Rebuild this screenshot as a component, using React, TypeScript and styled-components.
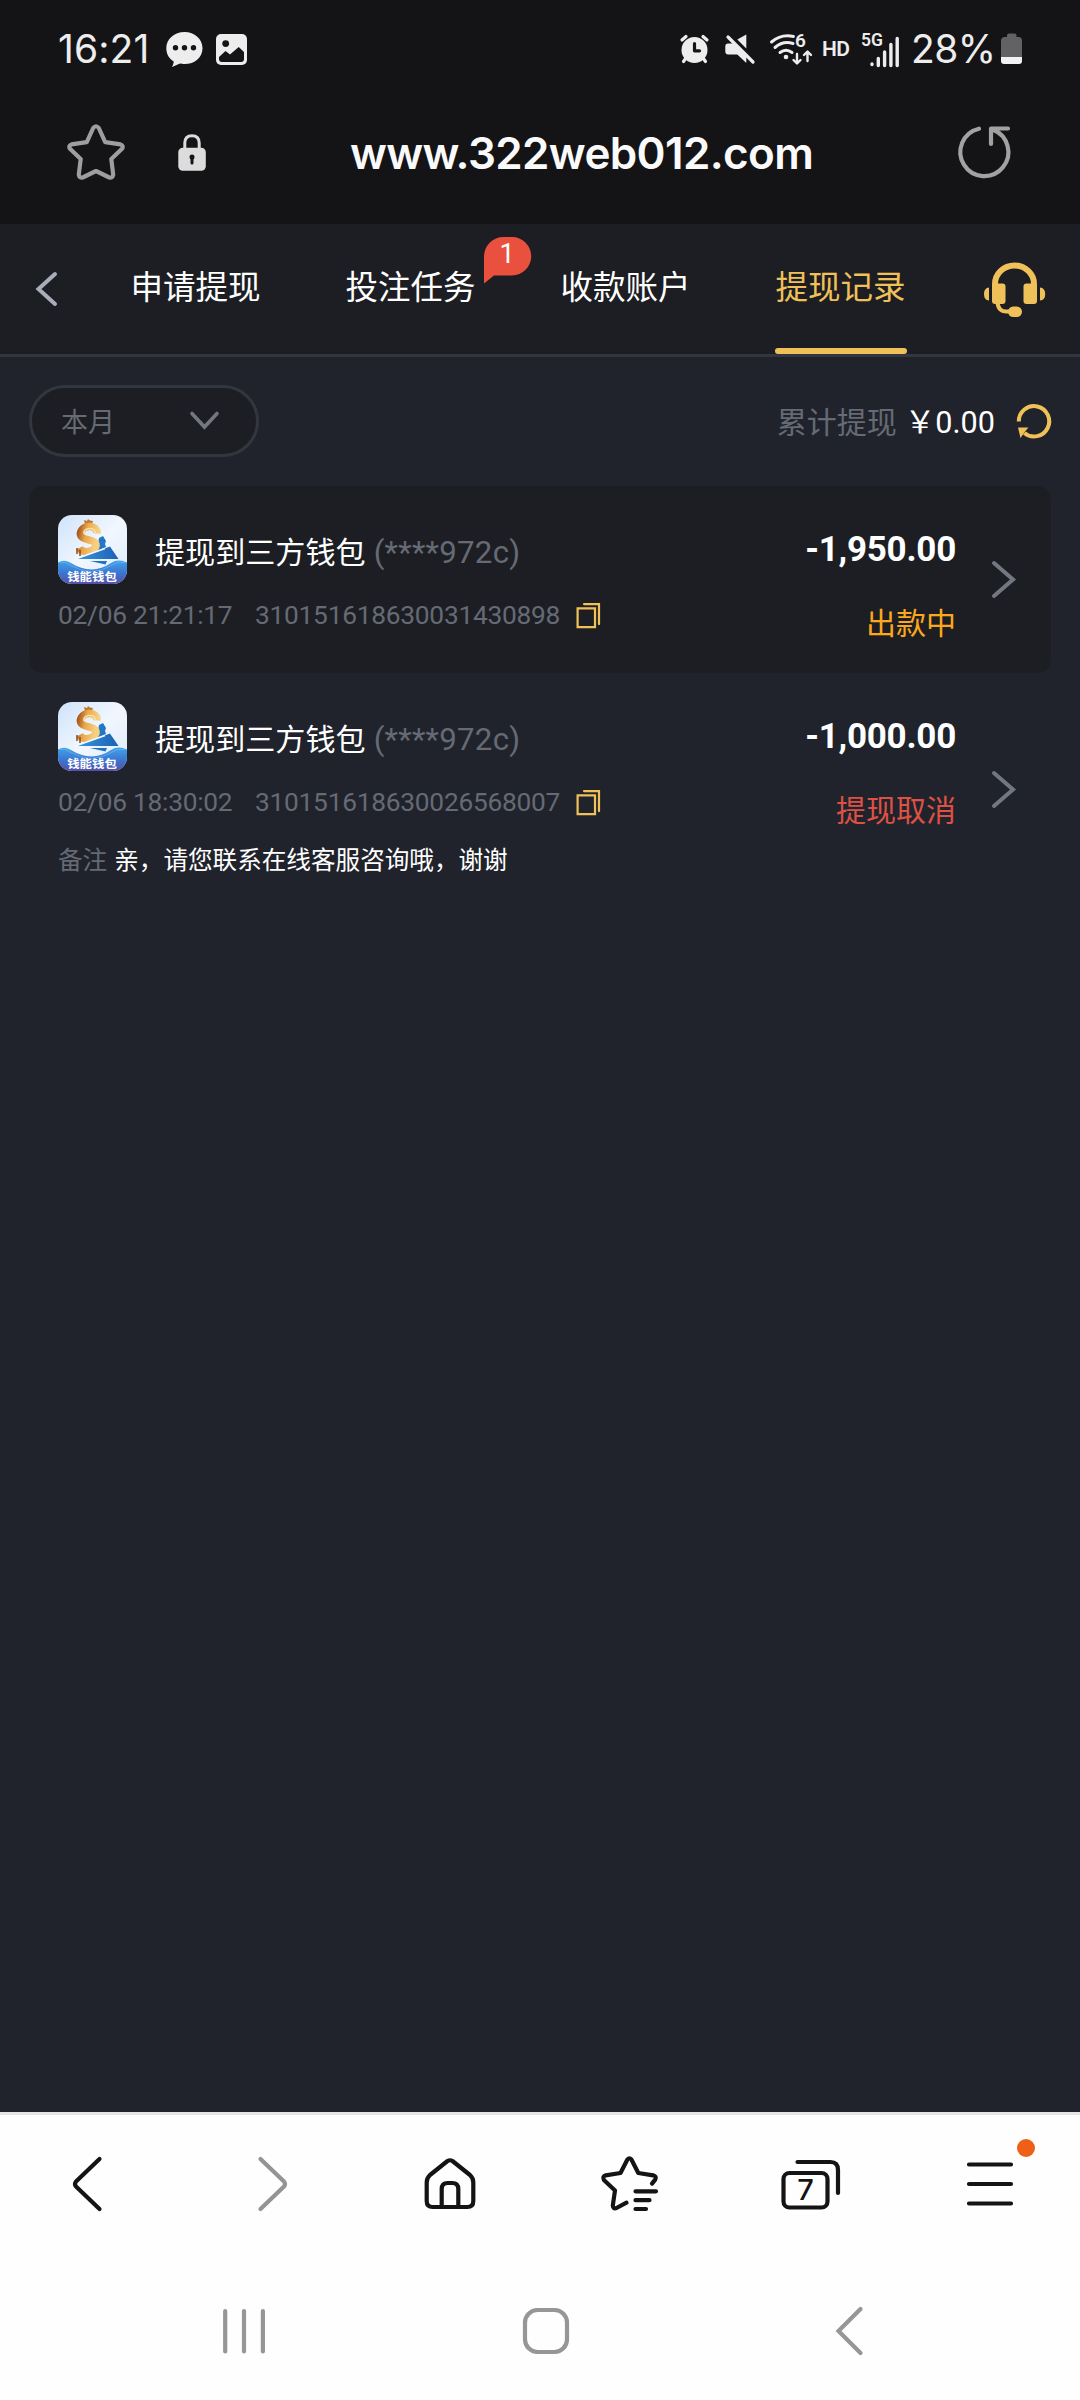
import React from "react";
import styled, { createGlobalStyle } from "styled-components";

const GlobalStyle = createGlobalStyle`
  * { box-sizing: border-box; }
  body { margin: 0; background: #20232b; }
`;

const ui = `Inter, Roboto, "Noto Sans CJK SC", sans-serif`;
const web = `Roboto, "Noto Sans CJK SC", sans-serif`;
const gold = "#f0c159";
const grey = "#656a75";

const Screen = styled.div`
  width: 1080px;
  height: 2400px;
  display: flex;
  flex-direction: column;
  background: #20232b;
  font-family: ${web};
  overflow: hidden;
`;

const Svg = styled.svg`
  display: block;
  flex: none;
  overflow: visible;
`;

/* Crops a w×h window out of the screen-sized coordinate space. */
type IconProps = { x: number; y: number; w: number; h: number; children: React.ReactNode };
const Icon = ({ x, y, w, h, children }: IconProps) => (
  <Svg width={w} height={h} viewBox={`${x} ${y} ${w} ${h}`} fill="none" strokeLinecap="round" strokeLinejoin="round">
    {children}
  </Svg>
);

/* ---------- browser chrome ---------- */

const StatusBar = styled.header`
  height: 98px;
  display: flex;
  align-items: center;
  padding: 0 57px 0 58px;
  background: #141416;
  color: #ededed;
  font: 400 39px/40px ${ui};
`;
const Clock = styled.span`
  width: 98px;
  letter-spacing: 0.1px;
  margin-right: 10px;
`;
const Notices = styled.div`
  display: flex;
  gap: 13px;
`;
const Indicators = styled.div`
  display: flex;
  align-items: center;
  margin-left: auto;
`;
const Gap = styled.span<{ $w: number }>`
  width: ${(p) => p.$w}px;
`;
const Hd = styled.span`
  width: 26px;
  font: 600 21px/24px Roboto, sans-serif;
  letter-spacing: -0.5px;
`;
const Percent = styled.span`
  width: 84px;
  letter-spacing: -0.6px;
  white-space: nowrap;
`;

const AddressBar = styled.div`
  height: 126px;
  display: flex;
  align-items: flex-start;
  padding: 24px 66px 0 66px;
  background: #141416;
`;
const Url = styled.div`
  flex: 1;
  padding-left: 143px;
  color: #fafafa;
  font: 600 44px/62px ${ui};
  letter-spacing: -0.65px;
  white-space: nowrap;
`;

/* ---------- page ---------- */

const Header = styled.nav`
  height: 133px;
  display: flex;
  background: #1d1e23;
  border-bottom: 3px solid #32363f;
`;
const BackButton = styled.div`
  width: 89px;
  padding: 46px 0 0 34px;
`;
const Tab = styled.div<{ $active?: boolean }>`
  width: 215px;
  display: flex;
  flex-direction: column;
  align-items: center;
  color: ${(p) => (p.$active ? gold : "#fff")};
  font-size: 32.5px;
  line-height: 48px;
  padding-top: 40px;
  padding-right: 2px;
`;
const TabLabel = styled.span`
  position: relative;
`;
const TabLine = styled.i`
  width: 132px;
  height: 6px;
  margin-top: auto;
  border-radius: 3px;
  background: ${gold};
`;
const Badge = styled.span`
  position: absolute;
  left: 139px;
  top: -27px;
  width: 47px;
  height: 47px;
  display: grid;
  justify-items: center;
  color: #fff;
  font-size: 27px;
  line-height: 34px;
`;
const BadgeShape = styled(Svg)`
  position: absolute;
  left: 0;
  top: 0;
`;
const BadgeText = styled.span`
  position: relative;
  padding-right: 2px;
`;
const Support = styled.div`
  padding: 37px 0 0 34px;
`;

const FilterRow = styled.section`
  display: flex;
  justify-content: space-between;
  padding: 28px 29px 29px;
`;
const MonthSelect = styled.div`
  width: 230px;
  height: 72px;
  display: flex;
  align-items: center;
  justify-content: space-between;
  padding: 0 36px 2px 29px;
  border: 3px solid #32363f;
  border-radius: 36px;
  background: #1d1e23;
  color: ${grey};
  font-size: 27px;
  line-height: 40px;
`;
const MonthLabel = styled.span`
  padding-top: 6px;
`;
const Total = styled.div`
  display: flex;
  align-items: center;
  color: ${grey};
  font-size: 30px;
  line-height: 44px;
`;
const TotalLabel = styled.span`
  padding-top: 4px;
`;
const TotalValue = styled.b`
  margin: 0 21px 0 8px;
  padding-top: 4px;
  color: #fff;
  font-weight: 400;
  font-size: 30.6px;
`;

const Record = styled.article<{ $dark?: boolean; $h: number }>`
  height: ${(p) => p.$h}px;
  margin: 0 29px;
  padding: 28px 36px 0 29px;
  display: flex;
  border-radius: 14px;
  background: ${(p) => (p.$dark ? "#1d1e23" : "transparent")};
`;
const Info = styled.div`
  flex: 1;
  display: flex;
  flex-direction: column;
`;
const TitleRow = styled.div`
  height: 71px;
  display: flex;
  align-items: center;
  gap: 28px;
`;
const Title = styled.div`
  padding-top: 6px;
  color: #fff;
  font-size: 30.1px;
  line-height: 44px;
  white-space: pre;
`;
const Muted = styled.span`
  color: ${grey};
`;
const Account = styled(Muted)`
  font-size: 31.2px;
  letter-spacing: 0.25px;
`;
const Meta = styled.div`
  height: 32px;
  margin-top: 14px;
  display: flex;
  align-items: center;
  color: ${grey};
  font-size: 26.3px;
  line-height: 32px;
  letter-spacing: -0.25px;
`;
const Time = styled.span`
  width: 197px;
  white-space: nowrap;
`;
const OrderNo = styled.span`
  width: 320px;
`;
const Note = styled.div`
  margin-top: 23px;
  display: flex;
  gap: 7px;
  color: #fff;
  font-size: 24.6px;
  line-height: 40px;
`;
const Result = styled.div`
  display: flex;
  flex-direction: column;
  align-items: flex-end;
  margin-right: 35px;
`;
const Amount = styled.strong`
  margin-top: 14px;
  color: #fff;
  font-size: 35px;
  line-height: 44px;
  letter-spacing: -0.25px;
`;
const Status = styled.span<{ $color: string }>`
  margin-top: 30px;
  color: ${(p) => p.$color};
  font-size: 30px;
  line-height: 44px;
`;
const Arrow = styled.div`
  display: flex;
  align-items: center;
  padding-bottom: 28px;
`;

/* ---------- bottom bars ---------- */

const Toolbar = styled.footer`
  height: 142px;
  margin-top: auto;
  padding-top: 37px;
  display: grid;
  grid-template-columns: repeat(6, 180px);
  justify-items: center;
  align-items: start;
  background: #fefefe;
  border-top: 3px solid #e5e5e7;
`;
const SystemNav = styled.div`
  height: 146px;
  padding: 46px 80px 0 93px;
  display: grid;
  grid-template-columns: repeat(3, 302px);
  justify-items: center;
  align-items: start;
  background: #fefefe;
`;

const WalletLogo = () => (
  <Svg width="69" height="69" viewBox="0 0 69 69">
    <defs>
      <clipPath id="tile"><rect width="69" height="69" rx="14" /></clipPath>
      <linearGradient id="sky" x1="0" y1="0" x2="1" y2="1">
        <stop offset="0" stopColor="#cfe3fb" /><stop offset=".5" stopColor="#f1f7fe" /><stop offset="1" stopColor="#dbeafd" />
      </linearGradient>
      <linearGradient id="sea" x1="0" y1="0" x2="0" y2="1">
        <stop offset="0" stopColor="#42a3ea" /><stop offset=".55" stopColor="#3b74cf" /><stop offset="1" stopColor="#5750a8" />
      </linearGradient>
      <linearGradient id="coin" x1="0" y1="0" x2="1" y2=".3">
        <stop offset="0" stopColor="#a95b22" /><stop offset=".4" stopColor="#e9a64a" /><stop offset="1" stopColor="#f6cf80" />
      </linearGradient>
      <linearGradient id="hull" x1="0" y1="0" x2="1" y2="0">
        <stop offset="0" stopColor="#3a9ae0" /><stop offset="1" stopColor="#1c5fb4" />
      </linearGradient>
    </defs>
    <g clipPath="url(#tile)">
      <rect width="69" height="69" fill="url(#sky)" />
      <path d="M41 23l4-2 3 5-1 3 1 3-9 4z" fill="#2477c4" />
      <path d="M26 5l3 1 1-2 2 1.500 3 .5-1 3v4l-6 1z" fill="#c47a2c" />
      <path d="M39 18.500c.5-5-4-7.500-8.500-7-6 .5-9.500 5.500-7.500 9.500 2.500 4.500 14 3.500 15 8.500.5 3-2.500 5.500-6 6.500-5 1.500-8.500.5-10.500-3" fill="none" stroke="url(#coin)" strokeWidth="7.500" />
      <path d="M37 18c.5-3.500-2.500-5-6-4.500-4 .5-6 3-5 5.500" fill="none" stroke="#fbe2ab" strokeWidth="1.500" />
      <path d="M19 33v6M22 35v6" stroke="#8f4a1c" strokeWidth="1.500" />
      <path d="M17.500 44L52 31.500l8.500 12.500z" fill="url(#hull)" />
      <path d="M16 44.500L47 33.500" stroke="#f4faff" strokeWidth="1.500" />
      <path d="M32 46h17l-1.500 3.500z" fill="#2372c2" />
      <path d="M0 47.500Q6 44 12 47.500Q34 61 53 48Q60 43.500 69 47.500V69H0z" fill="url(#sea)" />
      <path d="M2 47.500Q7 46 12 50Q34 63 54 50Q60 46 67 47.500" fill="none" stroke="#7cc4f8" strokeWidth="1" opacity=".5" />
      <text transform="translate(34 65.500) scale(1 .88)" textAnchor="middle" fontFamily="Noto Sans CJK SC, sans-serif" fontWeight="700" fontSize="12.400" fill="#fff">钱能钱包</text>
    </g>
  </Svg>
);

const CopyIcon = () => (
  <Icon x={575} y={602} w={27} h={28}>
    <g stroke={gold} strokeWidth="2.2" strokeLinejoin="miter">
      <path d="M577.6 609.3h17.4v18.8h-17.4z" />
      <path d="M584 605.100h15v20" />
    </g>
  </Icon>
);

type RecordData = { time: string; order: string; amount: string; status: string; color: string; note?: string };

const RecordItem = ({ data, dark }: { data: RecordData; dark?: boolean }) => (
  <Record $dark={dark} $h={data.note ? 232 : 187}>
    <Info>
      <TitleRow>
        <WalletLogo />
        <Title>提现到三方钱包<Account> (****972c)</Account></Title>
      </TitleRow>
      <Meta>
        <Time>{data.time}</Time>
        <OrderNo>{data.order}</OrderNo>
        <CopyIcon />
      </Meta>
      {data.note && <Note><Muted>备注</Muted>{data.note}</Note>}
    </Info>
    <Result>
      <Amount>{data.amount}</Amount>
      <Status $color={data.color}>{data.status}</Status>
    </Result>
    <Arrow>
      <Icon x={991} y={560} w={24} h={39}>
        <path d="M994 563l19 16.5-19 16.5" stroke="#737782" strokeWidth="4" strokeLinejoin="miter" />
      </Icon>
    </Arrow>
  </Record>
);

const records: RecordData[] = [
  { time: "02/06 21:21:17", order: "310151618630031430898", amount: "-1,950.00", status: "出款中", color: "#fba81c" },
  { time: "02/06 18:30:02", order: "310151618630026568007", amount: "-1,000.00", status: "提现取消", color: "#dd5145", note: "亲，请您联系在线客服咨询哦，谢谢" },
];

export default function App() {
  return (
    <Screen>
      <GlobalStyle />
      <StatusBar>
        <Clock>16:21</Clock>
        <Notices>
          <Icon x={166} y={31} w={37} h={37}>
            <path d="M184.5 32c10.200 0 18 7 18 16.200S195 64 184.500 64c-2 0-3 0-4.500-.4L172 67c1-2 1.600-3.500 1.700-5.500C169 58.500 166.300 54 166.300 48.200 166.300 39 174.300 32 184.500 32z" fill="#ededed" />
            <g fill="#141416"><circle cx="175.500" cy="47.700" r="2.700" /><circle cx="184.500" cy="47.700" r="2.700" /><circle cx="193.500" cy="47.700" r="2.700" /></g>
          </Icon>
          <Icon x={216} y={31} w={32} h={37}>
            <rect x="216" y="34" width="31" height="31" rx="5" fill="#ededed" />
            <circle cx="225.700" cy="43.600" r="3.400" fill="#141416" />
            <path d="M219 57l6.500-6 4.500 3.500 8.700-7.500 5.300 5v7q0 3-3 3h-19q-3 0-3-3z" fill="#141416" />
          </Icon>
        </Notices>
        <Indicators>
          <Icon x={680} y={31} w={30} h={37}>
            <circle cx="694.500" cy="50" r="13" fill="#ededed" />
            <path d="M682 40l4-3.500M707 40l-4-3.500M686 58l-2.500 3.500M703 58l2.500 3.500" stroke="#ededed" strokeWidth="3.200" />
            <path d="M694.500 43.500v7.300h5" stroke="#141416" strokeWidth="3.200" />
          </Icon>
          <Gap $w={15} />
          <Icon x={725} y={31} w={30} h={37}>
            <path d="M746.300 34.500v14l-9-9zM728 43.500h5l13.300 13V63l-9-8.500h-9q-3 0-3-3v-5q0-3 2.700-3z" fill="#ededed" />
            <path d="M728 37l25 25" stroke="#ededed" strokeWidth="3.200" />
          </Icon>
          <Gap $w={15} />
          <Icon x={770} y={31} w={43} h={37}>
            <g stroke="#ededed" strokeWidth="3">
              <path d="M771.500 42q10-8.500 22-5.500M775 47.500q8-7 18-4M780 52.500q6-4.500 12 0" />
              <path d="M797 54v9M793.500 60l3.500 3.500 3.500-3.500M807.500 61v-9M804 55l3.500-3.500 3.500 3.500" strokeWidth="2.400" />
            </g>
            <circle cx="786" cy="57" r="2.300" fill="#ededed" />
            <text x="795" y="47" fontFamily="Roboto, sans-serif" fontWeight="600" fontSize="19" fill="#ededed">6</text>
          </Icon>
          <Gap $w={9} />
          <Hd>HD</Hd>
          <Gap $w={14} />
          <Icon x={862} y={31} w={38} h={37}>
            <text x="861" y="46" fontFamily="Roboto, sans-serif" fontWeight="600" fontSize="17.500" fill="#ededed">5G</text>
            <path d="M872 64v.5M878.300 58.500v7M884.600 52v13.500M890.900 44.500v21M897.200 38.500v27" stroke="#ededed" strokeWidth="3.400" />
          </Icon>
          <Gap $w={11} />
          <Percent>28%</Percent>
          <Gap $w={6} />
          <Icon x={1001} y={31} w={22} h={37}>
            <path d="M1001 41q0-4 4-4h2v-1.500q0-2 2-2h5.500q2 0 2 2V37h2q3.500 0 3.500 4v16h-21z" fill="#626264" />
            <path d="M1001 57h21v4q0 3-3 3h-15q-3 0-3-3z" fill="#f2f2f2" />
          </Icon>
        </Indicators>
      </StatusBar>

      <AddressBar>
        <Icon x={66} y={122} w={60} h={60}>
          <path d="M93.200 128q2.800-3.500 5.600 0l6.400 14.200 15.300 2.200q3.500 1.200 1.500 4.400L111.300 159l1.900 15.500q-.3 3.700-3.900 3L96 171l-13.300 6.500q-3.600.700-3.900-3L80.700 159 70 148.800q-2-3.200 1.500-4.400l15.300-2.200z" stroke="#9e9e9e" strokeWidth="4.200" />
        </Icon>
        <Gap $w={51} />
        <Icon x={177} y={122} w={30} h={60}>
          <path d="M184.800 149v-6q0-7.300 7.200-7.300t7.200 7.300v6" stroke="#dcdcdc" strokeWidth="3" />
          <rect x="178.300" y="147.700" width="27.500" height="23" rx="4.500" fill="#dcdcdc" />
          <path d="M192 157v6" stroke="#141416" strokeWidth="3" />
          <circle cx="192" cy="157" r="2.500" fill="#141416" />
        </Icon>
        <Url>www.322web012.com</Url>
        <Icon x={956} y={122} w={58} h={60}>
          <path d="M979 128.700a24 24 0 1 0 14 1M1008 128.500h-17V144" stroke="#a2a2a2" strokeWidth="4.200" />
        </Icon>
      </AddressBar>

      <Header>
        <BackButton>
          <Icon x={34} y={270} w={26} h={38}>
            <path d="M55 274L38.500 289 55 304" stroke="#a9adb9" strokeWidth="4" strokeLinejoin="miter" />
          </Icon>
        </BackButton>
        <Tab><TabLabel>申请提现</TabLabel></Tab>
        <Tab>
          <TabLabel>
            投注任务
            <Badge>
              <BadgeShape width="47" height="47" viewBox="0 0 47 47">
                <path d="M0 46.500V19.500A19.500 19.500 0 0 1 19.500 0H28a19 19 0 0 1 0 38.500H10z" fill="#e9503e" />
              </BadgeShape>
              <BadgeText>1</BadgeText>
            </Badge>
          </TabLabel>
        </Tab>
        <Tab><TabLabel>收款账户</TabLabel></Tab>
        <Tab $active><TabLabel>提现记录</TabLabel><TabLine /></Tab>
        <Support>
          <Icon x={983} y={261} w={64} h={58}>
            <path d="M995 287v-3a19.500 18.500 0 0 1 39 0v3" stroke={gold} strokeWidth="6" strokeLinecap="butt" />
            <rect x="992" y="283.500" width="13.500" height="20.500" rx="3" fill={gold} />
            <rect x="1023.500" y="283.500" width="13.500" height="20.500" rx="3" fill={gold} />
            <path d="M989 287.500v13q-5-.5-5-6.500t5-6.500zM1040 287.500v13q5.200-.5 5.200-6.500t-5.200-6.500z" fill={gold} />
            <path d="M997.500 302q.5 9.500 9 9.500h5" stroke={gold} strokeWidth="4" />
            <rect x="1008" y="306.500" width="14" height="10.500" rx="5.200" fill={gold} />
          </Icon>
        </Support>
      </Header>

      <FilterRow>
        <MonthSelect>
          <MonthLabel>本月</MonthLabel>
          <Icon x={189} y={411} w={31} h={20}>
            <path d="M192 414.500l12.500 13.500L217 414.500" stroke="#737782" strokeWidth="3.600" strokeLinejoin="miter" />
          </Icon>
        </MonthSelect>
        <Total>
          <TotalLabel>累计提现</TotalLabel>
          <TotalValue>￥0.00</TotalValue>
          <Icon x={1016} y={403} w={35} h={36}>
            <path d="M1018.800 421.500a15.200 15.200 0 1 1 5.500 11.500" stroke={gold} strokeWidth="4" strokeLinecap="butt" />
            <path d="M1018 427.500h10.500l-3.500 4-4.500 6.500z" fill={gold} />
          </Icon>
        </Total>
      </FilterRow>

      {records.map((r, i) => (
        <RecordItem key={r.order} data={r} dark={i % 2 === 0} />
      ))}

      <Toolbar>
        <Icon x={60} y={2152} w={60} h={62}>
          <path d="M99.500 2159L76 2181.500q-2 2.500 0 5L99.500 2209" stroke="#141416" strokeWidth="4.200" />
        </Icon>
        <Icon x={240} y={2152} w={60} h={62}>
          <path d="M260.500 2159L284 2181.500q2 2.500 0 5L260.500 2209" stroke="#949494" strokeWidth="4.200" />
        </Icon>
        <Icon x={420} y={2152} w={60} h={62}>
          <path d="M447.500 2161q2.500-1.500 5 0l17.500 14q3.300 3 3.300 7.500V2201q0 6-6 6h-34.600q-6 0-6-6v-18.500q0-4.500 3.300-7.500zM441.700 2207v-18q0-6 6-6h4.600q6 0 6 6v18" stroke="#141416" strokeWidth="4.200" />
        </Icon>
        <Icon x={600} y={2152} w={60} h={62}>
          <path d="M626.500 2202.700l-10 5.300q-3.500 1.300-3.700-2.500L615 2190.500 603.900 2180q-1.800-3.500 1.800-4.700l14.800-2.300 6.900-13.500q2-2.500 4 0l6.900 13.500 14.900 2.300q3.800 1.200 2 4.300l-3.200 4" stroke="#141416" strokeWidth="4.200" />
          <path d="M635.500 2191.300h20.500M635.500 2200.200h14M635.500 2209h10.500" stroke="#141416" strokeWidth="4.200" />
        </Icon>
        <Icon x={780} y={2152} w={60} h={62}>
          <rect x="783.500" y="2173" width="44" height="34.500" rx="6" stroke="#141416" strokeWidth="4.200" />
          <path d="M797.500 2162h33q7.500 0 7.500 8v23" stroke="#141416" strokeWidth="4.200" />
          <text x="805.500" y="2200" textAnchor="middle" fontFamily="Inter, sans-serif" fontWeight="500" fontSize="29" fill="#141416">7</text>
        </Icon>
        <Icon x={960} y={2152} w={60} h={62}>
          <path d="M969 2164.500h42M969 2184h42M969 2203.500h42" stroke="#141416" strokeWidth="4.200" />
          <circle cx="1026" cy="2148" r="9" fill="#ee5f17" />
        </Icon>
      </Toolbar>

      <SystemNav>
        <Icon x={214} y={2300} w={60} h={62}>
          <path d="M225.200 2311v40.500M244 2311v40.500M262.900 2311v40.500" stroke="#969696" strokeWidth="4.200" />
        </Icon>
        <Icon x={516} y={2300} w={60} h={62}>
          <rect x="525" y="2310" width="42" height="42" rx="12.500" stroke="#969696" strokeWidth="4.200" />
        </Icon>
        <Icon x={818} y={2300} w={60} h={62}>
          <path d="M860.500 2309L838.500 2331l22 22" stroke="#969696" strokeWidth="4.200" strokeLinejoin="miter" />
        </Icon>
      </SystemNav>
    </Screen>
  );
}
